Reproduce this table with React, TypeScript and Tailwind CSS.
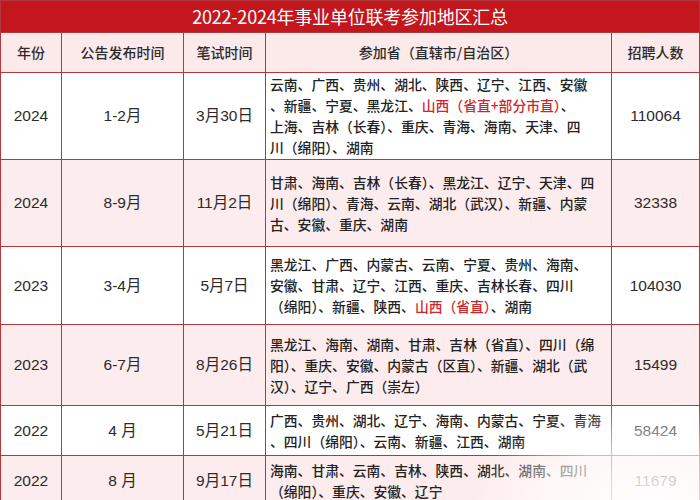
import React from "react";

type Row = {
  year: string;
  notice: string;
  exam: string;
  lines: React.ReactNode[];
  count: string;
  h: string;
  pink: boolean;
};

const Red = ({ children }: { children: React.ReactNode }) => (
  <span className="text-[#d3242b]">{children}</span>
);

const rows: Row[] = [
  {
    year: "2024",
    notice: "1-2月",
    exam: "3月30日",
    lines: [
      "云南、广西、贵州、湖北、陕西、辽宁、江西、安徽",
      <>
        、新疆、宁夏、黑龙江、<Red>山西（省直+部分市直）</Red>、
      </>,
      "上海、吉林（长春）、重庆、青海、海南、天津、四",
      "川（绵阳）、湖南",
    ],
    count: "110064",
    h: "h-[87px]",
    pink: false,
  },
  {
    year: "2024",
    notice: "8-9月",
    exam: "11月2日",
    lines: [
      "甘肃、海南、吉林（长春）、黑龙江、辽宁、天津、四",
      "川（绵阳）、青海、云南、湖北（武汉）、新疆、内蒙",
      "古、安徽、重庆、湖南",
    ],
    count: "32338",
    h: "h-[87px]",
    pink: true,
  },
  {
    year: "2023",
    notice: "3-4月",
    exam: "5月7日",
    lines: [
      "黑龙江、广西、内蒙古、云南、宁夏、贵州、海南、",
      "安徽、甘肃、辽宁、江西、重庆、吉林长春、四川",
      <>
        （绵阳）、新疆、陕西、<Red>山西（省直）</Red>、湖南
      </>,
    ],
    count: "104030",
    h: "h-[78px]",
    pink: false,
  },
  {
    year: "2023",
    notice: "6-7月",
    exam: "8月26日",
    lines: [
      "黑龙江、海南、湖南、甘肃、吉林（省直）、四川（绵",
      "阳）、重庆、安徽、内蒙古（区直）、新疆、湖北（武",
      "汉）、辽宁、广西（崇左）",
    ],
    count: "15499",
    h: "h-[81px]",
    pink: true,
  },
  {
    year: "2022",
    notice: "4 月",
    exam: "5月21日",
    lines: [
      "广西、贵州、湖北、辽宁、海南、内蒙古、宁夏、青海",
      "、四川（绵阳）、云南、新疆、江西、湖南",
    ],
    count: "58424",
    h: "h-[50px]",
    pink: false,
  },
  {
    year: "2022",
    notice: "8 月",
    exam: "9月17日",
    lines: [
      "海南、甘肃、云南、吉林、陕西、湖北、湖南、四川",
      "（绵阳）、重庆、安徽、辽宁",
    ],
    count: "11679",
    h: "h-[50px]",
    pink: true,
  },
];

const cell = "border-[1.5px] border-[#b3383e] align-middle";

export default function App() {
  return (
    <div className="relative w-[700px] h-[500px] overflow-hidden bg-white font-['Liberation_Sans','Noto_Sans_CJK_SC',sans-serif] text-[#2b2b2b]">
      <table className="w-[699px] table-fixed border-collapse">
        <colgroup>
          <col className="w-[61px]" />
          <col className="w-[122px]" />
          <col className="w-[82px]" />
          <col className="w-[346px]" />
          <col className="w-[88px]" />
        </colgroup>
        <thead>
          <tr className="h-[32px]">
            <th
              colSpan={5}
              className="border-[1.5px] border-[#b3383e] bg-[#c3161d] text-white text-[18px] font-normal tracking-[-0.2px] font-['Noto_Sans_CJK_SC',sans-serif]"
            >
              2022-2024年事业单位联考参加地区汇总
            </th>
          </tr>
          <tr className="h-[40px] bg-[#fce9ea] text-[14px] font-['Noto_Sans_CJK_SC',sans-serif]">
            <th className={`${cell} font-medium`}>年份</th>
            <th className={`${cell} font-medium`}>公告发布时间</th>
            <th className={`${cell} font-medium`}>笔试时间</th>
            <th className={`${cell} font-medium`}>参加省（直辖市/自治区）</th>
            <th className={`${cell} font-medium`}>招聘人数</th>
          </tr>
        </thead>
        <tbody>
          {rows.map((r, i) => (
            <tr key={i} className={`${r.h} ${r.pink ? "bg-[#fdeced]" : "bg-white"}`}>
              <td className={`${cell} text-center text-[15.5px]`}>{r.year}</td>
              <td className={`${cell} text-center text-[15.5px]`}>{r.notice}</td>
              <td className={`${cell} text-center text-[15.5px]`}>{r.exam}</td>
              <td
                className={`${cell} pl-[4px] text-left text-[13.8px] leading-[21px] whitespace-nowrap font-medium text-[#222] font-['Noto_Sans_CJK_SC',sans-serif]`}
              >
                {r.lines.map((l, j) => (
                  <div key={j}>{l}</div>
                ))}
              </td>
              <td className={`${cell} text-center text-[15.5px]`}>{r.count}</td>
            </tr>
          ))}
        </tbody>
      </table>
      <div className="pointer-events-none absolute left-[470px] top-[400px] w-[300px] h-[160px] bg-[radial-gradient(ellipse_at_60%_65%,rgba(255,255,255,0.92)_0%,rgba(255,255,255,0.6)_40%,rgba(255,255,255,0)_70%)]" />
    </div>
  );
}
